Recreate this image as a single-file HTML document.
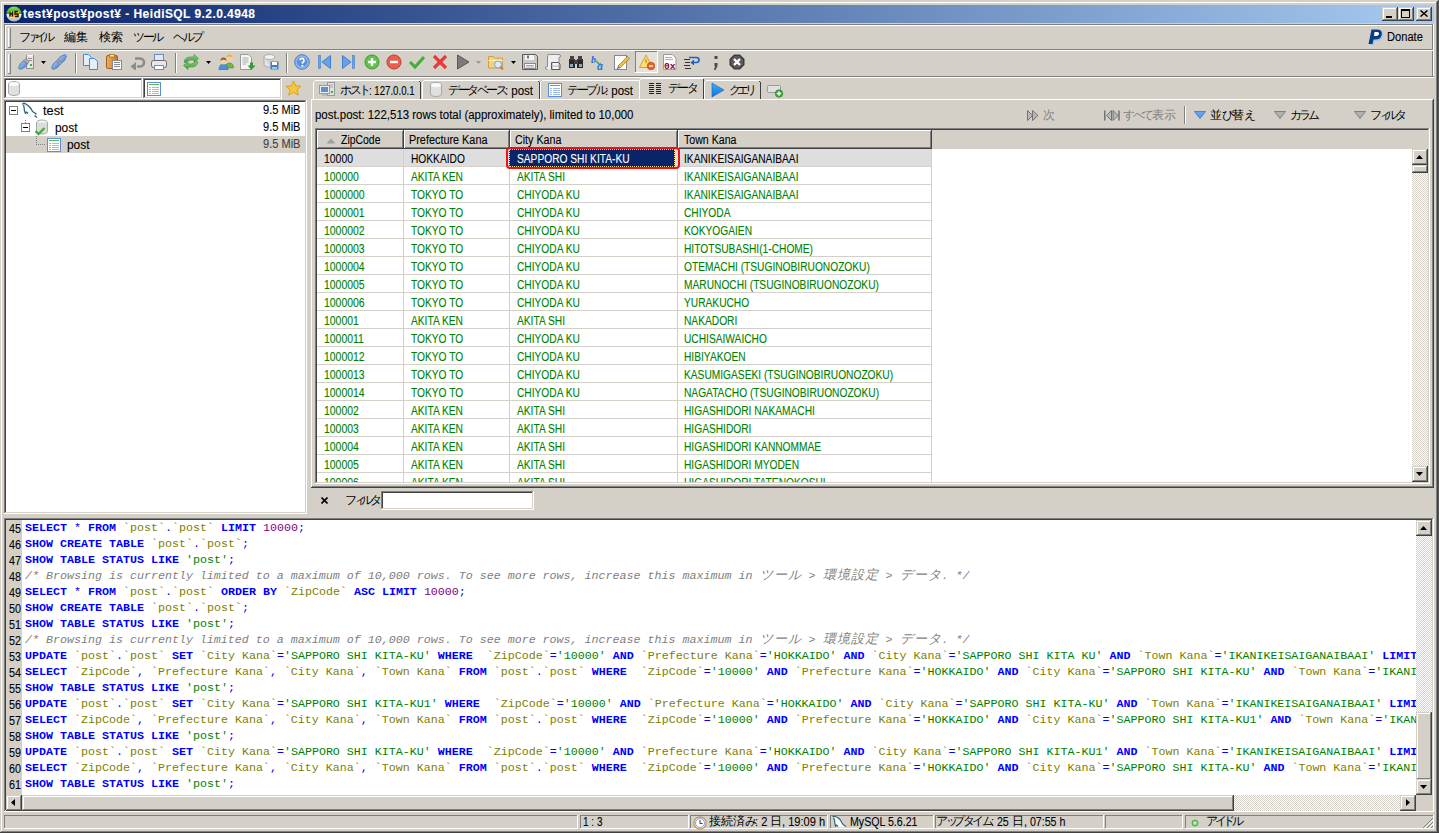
<!DOCTYPE html><html><head><meta charset="utf-8"><style>
html,body{margin:0;padding:0}
body{width:1439px;height:833px;position:relative;overflow:hidden;background:#d4d0c8;font-family:"Liberation Sans",sans-serif;font-size:12px;color:#000}
div,svg{position:absolute;box-sizing:border-box}
.t{white-space:pre;line-height:14px;font-size:12px;transform-origin:0 0;-webkit-text-stroke:0.1px currentColor}
.c{white-space:pre;line-height:14px;font-size:12px;text-align:center;overflow:visible}
.m{white-space:pre;font-family:"Liberation Mono",monospace;font-size:11.67px;line-height:16px}
.m i{display:inline-block;width:14px;font-style:inherit;text-align:center;font-size:13px;line-height:14px}
.kw{color:#0000ff;font-weight:bold}
.op{color:#0000ff}
.id{color:#808000}
.st{color:#008000}
.nu{color:#800080}
.cm{color:#808080;font-style:italic}
</style></head><body>
<div style="left:1px;top:2px;width:1px;height:829px;background:#ffffff"></div>
<div style="left:1px;top:2px;width:1436px;height:1px;background:#ffffff"></div>
<div style="left:1436px;top:2px;width:1px;height:829px;background:#808080"></div>
<div style="left:1437px;top:1px;width:1px;height:831px;background:#404040"></div>
<div style="left:1438px;top:0px;width:1px;height:833px;background:#555"></div>
<div style="left:1px;top:831px;width:1436px;height:1px;background:#808080"></div>
<div style="left:0px;top:832px;width:1439px;height:1px;background:#404040"></div>
<div style="left:4px;top:5px;width:1430px;height:18px;background:linear-gradient(to right,#0a246a,#a6caf0)"></div>
<svg style="left:6px;top:6px" width="16" height="16" viewBox="0 0 16 16"><defs><linearGradient id="hg" x1="0" y1="0" x2="0" y2="1"><stop offset="0" stop-color="#8ee05a"/><stop offset="0.5" stop-color="#3aaa12"/><stop offset="0.5" stop-color="#f4f4f4"/><stop offset="1" stop-color="#b0b0b0"/></linearGradient></defs><circle cx="8" cy="8" r="7.6" fill="url(#hg)"/><rect x="3" y="5" width="10" height="6" fill="#f8b828"/><path d="M4 5.5v5M4 8h2.5M6.5 5.5v5M12 5.5h-3v2.5h3v2.5h-3" stroke="#111" stroke-width="1.3" fill="none"/></svg>
<div class="t" style="left:23px;top:7px;color:#fff;font-weight:bold;letter-spacing:0.43px">test¥post¥post¥ - HeidiSQL 9.2.0.4948</div>
<div style="left:1382px;top:7px;width:16px;height:14px;background:#d4d0c8"></div>
<div style="left:1383px;top:8px;width:14px;height:1px;background:#ffffff"></div>
<div style="left:1383px;top:8px;width:1px;height:12px;background:#ffffff"></div>
<div style="left:1382px;top:20px;width:16px;height:1px;background:#404040"></div>
<div style="left:1397px;top:7px;width:1px;height:14px;background:#404040"></div>
<div style="left:1383px;top:19px;width:14px;height:1px;background:#808080"></div>
<div style="left:1396px;top:8px;width:1px;height:12px;background:#808080"></div>
<div style="left:1398px;top:7px;width:16px;height:14px;background:#d4d0c8"></div>
<div style="left:1399px;top:8px;width:14px;height:1px;background:#ffffff"></div>
<div style="left:1399px;top:8px;width:1px;height:12px;background:#ffffff"></div>
<div style="left:1398px;top:20px;width:16px;height:1px;background:#404040"></div>
<div style="left:1413px;top:7px;width:1px;height:14px;background:#404040"></div>
<div style="left:1399px;top:19px;width:14px;height:1px;background:#808080"></div>
<div style="left:1412px;top:8px;width:1px;height:12px;background:#808080"></div>
<div style="left:1416px;top:7px;width:16px;height:14px;background:#d4d0c8"></div>
<div style="left:1417px;top:8px;width:14px;height:1px;background:#ffffff"></div>
<div style="left:1417px;top:8px;width:1px;height:12px;background:#ffffff"></div>
<div style="left:1416px;top:20px;width:16px;height:1px;background:#404040"></div>
<div style="left:1431px;top:7px;width:1px;height:14px;background:#404040"></div>
<div style="left:1417px;top:19px;width:14px;height:1px;background:#808080"></div>
<div style="left:1430px;top:8px;width:1px;height:12px;background:#808080"></div>
<div style="left:1386px;top:16px;width:6px;height:2px;background:#000"></div>
<div style="left:1401px;top:9px;width:9px;height:9px;border:1px solid #000;border-top-width:2px"></div>
<svg style="left:1420px;top:10px" width="8" height="7" viewBox="0 0 8 7"><path d="M0.5 0.5 L7.5 6.5 M7.5 0.5 L0.5 6.5" stroke="#000" stroke-width="1.5"/></svg>
<div style="left:4px;top:24px;width:1430px;height:1px;background:#808080"></div>
<div style="left:4px;top:24px;width:1px;height:53px;background:#808080"></div>
<div style="left:5px;top:25px;width:1428px;height:1px;background:#ffffff"></div>
<div style="left:5px;top:25px;width:1px;height:52px;background:#ffffff"></div>
<div style="left:1432px;top:25px;width:1px;height:52px;background:#808080"></div>
<div style="left:1433px;top:24px;width:1px;height:54px;background:#ffffff"></div>
<div style="left:5px;top:49px;width:1428px;height:1px;background:#808080"></div>
<div style="left:5px;top:50px;width:1428px;height:1px;background:#ffffff"></div>
<div style="left:4px;top:76px;width:1430px;height:1px;background:#808080"></div>
<div style="left:4px;top:77px;width:1430px;height:1px;background:#ffffff"></div>
<div style="left:8px;top:28px;width:1px;height:19px;background:#ffffff"></div>
<div style="left:9px;top:28px;width:1px;height:19px;background:#d4d0c8"></div>
<div style="left:10px;top:28px;width:1px;height:19px;background:#808080"></div>
<div style="left:8px;top:47px;width:3px;height:1px;background:#808080"></div>
<div style="left:8px;top:54px;width:1px;height:19px;background:#ffffff"></div>
<div style="left:9px;top:54px;width:1px;height:19px;background:#d4d0c8"></div>
<div style="left:10px;top:54px;width:1px;height:19px;background:#808080"></div>
<div style="left:8px;top:73px;width:3px;height:1px;background:#808080"></div>
<div class="c" style="left:19.0px;top:30px;width:8.7px;color:#000;">フ</div>
<div class="c" style="left:27.7px;top:30px;width:6.9px;color:#000;">ァ</div>
<div class="c" style="left:34.6px;top:30px;width:8.7px;color:#000;">イ</div>
<div class="c" style="left:43.3px;top:30px;width:8.7px;color:#000;">ル</div>
<div class="c" style="left:64.0px;top:30px;width:11.5px;color:#000;">編</div>
<div class="c" style="left:75.5px;top:30px;width:11.5px;color:#000;">集</div>
<div class="c" style="left:99.0px;top:30px;width:11.5px;color:#000;">検</div>
<div class="c" style="left:110.5px;top:30px;width:11.5px;color:#000;">索</div>
<div class="c" style="left:133.0px;top:30px;width:9.7px;color:#000;">ツ</div>
<div class="c" style="left:142.7px;top:30px;width:9.7px;color:#000;">ー</div>
<div class="c" style="left:152.3px;top:30px;width:9.7px;color:#000;">ル</div>
<div class="c" style="left:173.0px;top:30px;width:9.7px;color:#000;">ヘ</div>
<div class="c" style="left:182.7px;top:30px;width:9.7px;color:#000;">ル</div>
<div class="c" style="left:192.3px;top:30px;width:9.7px;color:#000;">プ</div>
<svg style="left:1368px;top:29px" width="17" height="17" viewBox="0 0 17 17"><path d="M5 2 h6 c4 0 5 3 4 6 c-1 3 -3 4 -6 4 h-2 l-1 4 h-4 z" fill="#a9c6ea"/><path d="M3.5 0.5 h6 c4 0 5 3 4 6 c-1 3 -3 4 -6 4 h-2 l-1 4.5 h-4 z" fill="#0c3d7e"/><path d="M6.5 3 h2.5 c2 0 2 1 2 2 c-0.3 1.3 -1.2 2 -3 2 h-2 z" fill="#fff"/></svg>
<div class="t" style="left:1387.0px;top:30px;color:#000;transform:scaleX(0.927)">Donate</div>
<svg style="left:18px;top:54px" width="16" height="16" viewBox="0 0 16 16"><defs><linearGradient id="pl" x1="0" y1="0" x2="1" y2="1"><stop offset="0" stop-color="#b8d4f4"/><stop offset="1" stop-color="#3f78d0"/></linearGradient></defs><rect x="8.5" y="1.5" width="7" height="13" fill="#e6e6e6" stroke="#8c8c8c"/><path d="M9 1.5h6" stroke="#fafafa"/><path d="M10 4.5h4M10 6.5h4" stroke="#909090"/><rect x="12" y="10" width="2" height="2" fill="#40b040"/><path d="M0.5 14 L2.5 9.5 L6 6.5 L9.5 10 L6.5 13.5 L2 15.5 Z" fill="url(#pl)" stroke="#3a70c8" stroke-width="0.8"/><path d="M6 6.5 L8 4.5 L11 7.5 L9.5 10 Z" fill="#b0b0b0" stroke="#707070" stroke-width="0.7"/></svg>
<svg style="left:41px;top:61px" width="5" height="3" viewBox="0 0 5 3"><path d="M0 0 L5 0 L2.5 3 Z" fill="#000"/></svg>
<svg style="left:51px;top:54px" width="16" height="16" viewBox="0 0 16 16"><path d="M0.5 14 L2.5 9.5 L5.5 7 L9 10.5 L6.5 13.5 L2 15.5 Z" fill="url(#pl)" stroke="#3a70c8" stroke-width="0.8"/><path d="M15.5 2 L13.5 6.5 L10.5 9 L7 5.5 L9.5 2.5 L14 0.5 Z" fill="url(#pl)" stroke="#3a70c8" stroke-width="0.8"/><path d="M5.5 7 L7 5.5 L10.5 9 L9 10.5 Z" fill="#b0b0b0" stroke="#707070" stroke-width="0.7"/></svg>
<div style="left:75px;top:53px;width:1px;height:20px;background:#808080"></div>
<div style="left:76px;top:53px;width:1px;height:20px;background:#ffffff"></div>
<svg style="left:83px;top:54px" width="16" height="16" viewBox="0 0 16 16"><path d="M0.5 0.5 h5 l3 3 v8 h-8 z" fill="#e4eefb" stroke="#4a86d8"/><path d="M6.5 4.5 h5 l3 3 v8 h-8 z" fill="#e4eefb" stroke="#4a86d8"/></svg>
<svg style="left:106px;top:54px" width="16" height="16" viewBox="0 0 16 16"><defs><linearGradient id="cb" x1="0" y1="0" x2="1" y2="0"><stop offset="0" stop-color="#f0b060"/><stop offset="1" stop-color="#c07828"/></linearGradient></defs><rect x="0.5" y="1.5" width="11" height="13" rx="1.5" fill="url(#cb)" stroke="#a0601a"/><rect x="3.5" y="0.5" width="5" height="2.5" fill="#f8e0a0" stroke="#b07020" stroke-width="0.8"/><rect x="6.5" y="6.5" width="9" height="9" fill="#fafafa" stroke="#8a8a8a"/><path d="M8 8.5h6M8 10.5h6M8 12.5h6" stroke="#8a8a8a"/></svg>
<svg style="left:130px;top:54px" width="16" height="16" viewBox="0 0 16 16"><path d="M5 4.5 h5 a4 4 0 0 1 0 8 h-3" fill="none" stroke="#8c8c8c" stroke-width="2.6"/><path d="M0.5 12.5 l5.5 -4.5 v9 z" fill="#8c8c8c"/></svg>
<svg style="left:151px;top:54px" width="16" height="16" viewBox="0 0 16 16"><rect x="3.5" y="0.5" width="9" height="7" fill="#dbe9fb" stroke="#6b8fbf"/><rect x="0.5" y="6.5" width="15" height="7" rx="2" fill="#e8e8e8" stroke="#6a6a6a"/><rect x="3.5" y="11.5" width="9" height="4" fill="#fff" stroke="#6b8fbf"/></svg>
<div style="left:175px;top:53px;width:1px;height:20px;background:#808080"></div>
<div style="left:176px;top:53px;width:1px;height:20px;background:#ffffff"></div>
<svg style="left:183px;top:54px" width="16" height="16" viewBox="0 0 16 16"><defs><linearGradient id="gr" x1="0" y1="0" x2="0" y2="1"><stop offset="0" stop-color="#90d880"/><stop offset="1" stop-color="#3a9a3a"/></linearGradient></defs><path d="M1 8 q1 -5 7 -5 h3 v-2.5 l4.5 4 l-4.5 4 v-2.5 h-3 q-4 0 -5 3 z" fill="url(#gr)" stroke="#3a8a3a" stroke-width="0.6"/><path d="M15 8 q-1 5 -7 5 h-3 v2.5 l-4.5 -4 l4.5 -4 v2.5 h3 q4 0 5 -3 z" fill="url(#gr)" stroke="#3a8a3a" stroke-width="0.6"/></svg>
<svg style="left:206px;top:61px" width="5" height="3" viewBox="0 0 5 3"><path d="M0 0 L5 0 L2.5 3 Z" fill="#000"/></svg>
<svg style="left:218px;top:54px" width="16" height="16" viewBox="0 0 16 16"><path d="M7.5 14 q0 -5 4 -5 q4 0 4 5 z" fill="#70b848" stroke="#4a8a30" stroke-width="0.6"/><circle cx="11.5" cy="4.5" r="3" fill="#f8d0a0"/><path d="M8.5 4 q0 -3.5 3 -3.5 q3 0 3 3.5 q-1 -1.5 -3 -1.5 q-2 0 -3 1.5z" fill="#f0b030"/><path d="M1 16 q0 -6 4.5 -6 q4.5 0 4.5 6 z" fill="#4a90e0" stroke="#2a6ab8" stroke-width="0.6"/><circle cx="5.5" cy="7.5" r="3" fill="#f8d0a0"/><path d="M2.5 7 q0 -3.5 3 -3.5 q3 0 3 3.5 q-1 -1.5 -3 -1.5 q-2 0 -3 1.5z" fill="#8a5a30"/></svg>
<svg style="left:240px;top:54px" width="16" height="16" viewBox="0 0 16 16"><path d="M0.5 0.5 h8 l3 3 v12 h-11 z" fill="#f6f6f6" stroke="#999"/><path d="M2.5 4h6M2.5 6h6M2.5 8h6M2.5 10h4" stroke="#aaa"/><path d="M10 8.5 h3 v3 h2.5 l-4 4.5 l-4 -4.5 h2.5 z" fill="#3a9a3a"/></svg>
<svg style="left:263px;top:54px" width="16" height="16" viewBox="0 0 16 16"><ellipse cx="6.5" cy="3" rx="5.5" ry="2.5" fill="#f2f2f2" stroke="#aaa"/><path d="M1 3 v8 a5.5 2.5 0 0 0 7 2" fill="#e4e4e4" stroke="#aaa"/><rect x="7.5" y="7.5" width="8" height="8" fill="#3f7fd0"/><rect x="9" y="8" width="5" height="3" fill="#fff"/><rect x="9" y="13" width="5" height="2" fill="#9cd"/></svg>
<div style="left:286px;top:53px;width:1px;height:20px;background:#808080"></div>
<div style="left:287px;top:53px;width:1px;height:20px;background:#ffffff"></div>
<svg style="left:294px;top:54px" width="16" height="16" viewBox="0 0 16 16"><circle cx="8" cy="8" r="7.3" fill="#8fb4e8" stroke="#4a7cc8"/><circle cx="8" cy="8" r="5" fill="#5b8fd8"/><path d="M6 6.3 a2 2 0 1 1 2.5 2 v1.5" stroke="#fff" stroke-width="1.6" fill="none"/><rect x="7.5" y="11" width="1.8" height="1.8" fill="#fff"/></svg>
<svg style="left:317px;top:54px" width="16" height="16" viewBox="0 0 16 16"><rect x="1.5" y="1.5" width="2" height="13" fill="#6aa0e6" stroke="#3f7fd0" stroke-width="0.6"/><path d="M13.5 1.5 L5 8 L13.5 14.5 Z" fill="#6aa0e6" stroke="#3f7fd0"/></svg>
<svg style="left:340px;top:54px" width="16" height="16" viewBox="0 0 16 16"><rect x="12.5" y="1.5" width="2" height="13" fill="#6aa0e6" stroke="#3f7fd0" stroke-width="0.6"/><path d="M2.5 1.5 L11 8 L2.5 14.5 Z" fill="#6aa0e6" stroke="#3f7fd0"/></svg>
<svg style="left:364px;top:54px" width="16" height="16" viewBox="0 0 16 16"><circle cx="8" cy="8" r="7" fill="#62c24e" stroke="#3a9a2a"/><path d="M4 8h8M8 4v8" stroke="#fff" stroke-width="2.4"/></svg>
<svg style="left:386px;top:54px" width="16" height="16" viewBox="0 0 16 16"><circle cx="8" cy="8" r="7" fill="#ea6050" stroke="#c03a2a"/><path d="M4 8h8" stroke="#fff" stroke-width="2.4"/></svg>
<svg style="left:409px;top:54px" width="16" height="16" viewBox="0 0 16 16"><path d="M1 8 L6 13 L15 3" fill="none" stroke="#42ae3a" stroke-width="3"/></svg>
<svg style="left:432px;top:54px" width="16" height="16" viewBox="0 0 16 16"><path d="M2 2 L14 14 M14 2 L2 14" stroke="#e83a3a" stroke-width="3.2"/></svg>
<svg style="left:455px;top:54px" width="16" height="16" viewBox="0 0 16 16"><path d="M2.5 1 L14 8 L2.5 15 Z" fill="#7a7a7a" stroke="#5a5a5a"/></svg>
<svg style="left:476px;top:61px" width="5" height="3" viewBox="0 0 5 3"><path d="M0 0 L5 0 L2.5 3 Z" fill="#999"/></svg>
<svg style="left:488px;top:54px" width="16" height="16" viewBox="0 0 16 16"><path d="M0.5 2.5 h5 l1.5 1.5 h7.5 v10 h-14 z" fill="#f6d27a" stroke="#d0a040"/><path d="M0.5 6.5 h14" stroke="#fff3c8"/><circle cx="10" cy="10.5" r="3.5" fill="#d8e8ff" stroke="#7aa0d8"/><path d="M12.5 13 L15 15.5" stroke="#d07a30" stroke-width="2"/></svg>
<svg style="left:511px;top:61px" width="5" height="3" viewBox="0 0 5 3"><path d="M0 0 L5 0 L2.5 3 Z" fill="#000"/></svg>
<svg style="left:522px;top:54px" width="16" height="16" viewBox="0 0 16 16"><path d="M0.5 0.5 h13 l2 2 v13 h-15 z" fill="#c8c8c8" stroke="#5a5a5a"/><rect x="3" y="1" width="9" height="5" fill="#f4f4f4"/><rect x="5" y="1.5" width="2" height="3" fill="#777"/><rect x="2.5" y="9.5" width="11" height="5" fill="#fafafa" stroke="#8a8a8a"/><path d="M4 11.5h8M4 13h8" stroke="#aaa"/></svg>
<svg style="left:545px;top:54px" width="16" height="16" viewBox="0 0 16 16"><path d="M2.5 15.5 q-2 0 -2 -1.5 q0 -1.5 2 -1.5 v-11 q0 -1 1.5 -1 h10 q1.5 0 1.5 1.5 q0 1.5 -1.5 1.5 v12" fill="#eeeeee" stroke="#8a8a8a"/><path d="M6.5 8.5 h7 l1.5 1.5 v5.5 h-8.5 z" fill="#c8c8c8" stroke="#5a5a5a"/><rect x="8" y="9" width="5" height="2.5" fill="#f4f4f4"/><rect x="8" y="13" width="5" height="2" fill="#fafafa"/></svg>
<svg style="left:568px;top:54px" width="16" height="16" viewBox="0 0 16 16"><rect x="1" y="5" width="6" height="9" fill="#2a2a2a"/><rect x="9" y="5" width="6" height="9" fill="#2a2a2a"/><rect x="6" y="6" width="4" height="4" fill="#444"/><rect x="2" y="2" width="4" height="4" fill="#444"/><rect x="10" y="2" width="4" height="4" fill="#444"/><rect x="2" y="10" width="3" height="3" fill="#8ab"/><rect x="11" y="10" width="3" height="3" fill="#8ab"/></svg>
<svg style="left:591px;top:54px" width="16" height="16" viewBox="0 0 16 16"><text x="0" y="9" font-size="10" font-style="italic" font-weight="bold" fill="#2a6ad8" font-family="Liberation Serif">b</text><path d="M5 7 L9 11" stroke="#40a040" stroke-width="1.5"/><path d="M7 11.5 L10 11.5 L10 8.5 Z" fill="#40a040"/><text x="6" y="16" font-size="12" font-style="italic" font-weight="bold" fill="#2a7ae8" font-family="Liberation Serif">a</text></svg>
<svg style="left:614px;top:54px" width="16" height="16" viewBox="0 0 16 16"><rect x="0.5" y="1.5" width="12" height="14" fill="#fff" stroke="#888"/><path d="M4 12 L13.5 2.5 L15.5 4.5 L6 14 Z" fill="#f0c040" stroke="#a07010" stroke-width="0.7"/><path d="M2.5 15.5 L4 12 L6 14 Z" fill="#5a7ac0"/></svg>
<div style="left:635px;top:51px;width:23px;height:1px;background:#808080"></div>
<div style="left:635px;top:51px;width:1px;height:22px;background:#808080"></div>
<div style="left:635px;top:72px;width:23px;height:1px;background:#ffffff"></div>
<div style="left:657px;top:51px;width:1px;height:22px;background:#ffffff"></div>
<div style="left:636px;top:52px;width:21px;height:20px;background:#e4e1db"></div>
<svg style="left:639px;top:54px" width="16" height="16" viewBox="0 0 16 16"><path d="M7 1 L13.5 13.5 L0.5 13.5 Z" fill="#fbe070" stroke="#e0a020" stroke-linejoin="round"/><path d="M7 5 v4" stroke="#c8a040" stroke-width="1.6"/><circle cx="12" cy="12" r="3.8" fill="#f06020" stroke="#c04010" stroke-width="0.6"/><path d="M10 12h4" stroke="#fff" stroke-width="1.4"/></svg>
<svg style="left:662px;top:54px" width="16" height="16" viewBox="0 0 16 16"><path d="M1.5 0.5 h9 l3.5 3.5 v11.5 h-12.5 z" fill="#fafafa" stroke="#9a9a9a"/><path d="M3 3.5h7M3 5.5h8" stroke="#b0b0b0"/><text x="2" y="14.5" font-size="9.5" font-weight="bold" fill="#800030" font-family="Liberation Mono">0x</text></svg>
<svg style="left:684px;top:54px" width="16" height="16" viewBox="0 0 16 16"><path d="M0 5.5h6M1 8.5h5M0 11.5h6M1 14.5h6" stroke="#333" stroke-width="1"/><path d="M5 3.5 h7.5 a2.5 2.5 0 0 1 0 5 h-4" fill="none" stroke="#1a60c8" stroke-width="1.6"/><path d="M10 5.5 L6.5 8.5 L10 11.5 Z" fill="#1a60c8"/></svg>
<svg style="left:708px;top:54px" width="16" height="16" viewBox="0 0 16 16"><rect x="6.5" y="2" width="3" height="3" fill="#4a4a4a"/><path d="M6.5 9 h3 v3 l-2 4 h-1.5 l1 -4 h-0.5 z" fill="#4a4a4a"/></svg>
<svg style="left:729px;top:54px" width="16" height="16" viewBox="0 0 16 16"><path d="M5 0.5 h6 l4.5 4.5 v6 l-4.5 4.5 h-6 l-4.5 -4.5 v-6 z" fill="#3c3c3c"/><path d="M5.5 2 h5 l3.5 3.5 v5 l-3.5 3.5 h-5 l-3.5 -3.5 v-5 z" fill="#5a5a5a"/><path d="M5 5 L11 11 M11 5 L5 11" stroke="#fff" stroke-width="2.4"/></svg>
<div style="left:4px;top:78px;width:139px;height:21px;background:#ffffff"></div>
<div style="left:4px;top:78px;width:139px;height:1px;background:#808080"></div>
<div style="left:4px;top:78px;width:1px;height:21px;background:#808080"></div>
<div style="left:4px;top:98px;width:139px;height:1px;background:#ffffff"></div>
<div style="left:142px;top:78px;width:1px;height:21px;background:#ffffff"></div>
<div style="left:5px;top:79px;width:137px;height:1px;background:#404040"></div>
<div style="left:5px;top:79px;width:1px;height:19px;background:#404040"></div>
<div style="left:5px;top:97px;width:137px;height:1px;background:#d4d0c8"></div>
<div style="left:141px;top:79px;width:1px;height:19px;background:#d4d0c8"></div>
<div style="left:143px;top:78px;width:139px;height:21px;background:#ffffff"></div>
<div style="left:143px;top:78px;width:139px;height:1px;background:#808080"></div>
<div style="left:143px;top:78px;width:1px;height:21px;background:#808080"></div>
<div style="left:143px;top:98px;width:139px;height:1px;background:#ffffff"></div>
<div style="left:281px;top:78px;width:1px;height:21px;background:#ffffff"></div>
<div style="left:144px;top:79px;width:137px;height:1px;background:#404040"></div>
<div style="left:144px;top:79px;width:1px;height:19px;background:#404040"></div>
<div style="left:144px;top:97px;width:137px;height:1px;background:#d4d0c8"></div>
<div style="left:280px;top:79px;width:1px;height:19px;background:#d4d0c8"></div>
<div style="left:4px;top:100px;width:303px;height:414px;background:#ffffff"></div>
<div style="left:4px;top:100px;width:303px;height:1px;background:#808080"></div>
<div style="left:4px;top:100px;width:1px;height:414px;background:#808080"></div>
<div style="left:4px;top:513px;width:303px;height:1px;background:#ffffff"></div>
<div style="left:306px;top:100px;width:1px;height:414px;background:#ffffff"></div>
<div style="left:5px;top:101px;width:301px;height:1px;background:#404040"></div>
<div style="left:5px;top:101px;width:1px;height:412px;background:#404040"></div>
<div style="left:5px;top:512px;width:301px;height:1px;background:#d4d0c8"></div>
<div style="left:305px;top:101px;width:1px;height:412px;background:#d4d0c8"></div>
<div style="left:6px;top:136px;width:299px;height:17px;background:#d4d0c8"></div>
<div class="t" style="left:43.0px;top:104px;color:#000;transform:scaleX(1.062)">test</div>
<div class="t" style="left:55.0px;top:121px;color:#000;transform:scaleX(0.992)">post</div>
<div class="t" style="left:67.0px;top:138px;color:#000;transform:scaleX(0.992)">post</div>
<div class="t" style="left:263.0px;top:103px;color:#000;transform:scaleX(0.921)">9.5 MiB</div>
<div class="t" style="left:263.0px;top:120px;color:#000;transform:scaleX(0.921)">9.5 MiB</div>
<div class="t" style="left:263.0px;top:137px;color:#404040;transform:scaleX(0.921)">9.5 MiB</div>
<svg style="left:8px;top:81px" width="12" height="16" viewBox="0 0 12 16"><ellipse cx="6" cy="3" rx="5.5" ry="2.5" fill="#f6f6f6" stroke="#a8a8a8"/><path d="M0.5 3 v9 a5.5 2.5 0 0 0 11 0 v-9" fill="#e0e0e0" stroke="#a8a8a8"/><ellipse cx="6" cy="3" rx="5" ry="2" fill="#fafafa"/></svg>
<svg style="left:147px;top:82px" width="14" height="14" viewBox="0 0 14 14"><rect x="0.5" y="0.5" width="13" height="13" fill="#fff" stroke="#5a90d8"/><rect x="2" y="2" width="10" height="1" fill="#5cb85c"/><path d="M2 5.5h10M2 7.5h10M2 9.5h10M2 11.5h10" stroke="#9bbce8"/><path d="M4.5 5v7" stroke="#fff"/></svg>
<svg style="left:285px;top:80px" width="17" height="17" viewBox="0 0 17 17"><path d="M8.5 1 L10.7 6 L16 6.3 L11.9 9.8 L13.3 15.2 L8.5 12.3 L3.7 15.2 L5.1 9.8 L1 6.3 L6.3 6 Z" fill="#f6c838" stroke="#d89818" stroke-width="0.8"/></svg>
<div style="left:9px;top:106px;width:9px;height:9px;border:1px solid #808080;background:#fff"></div>
<div style="left:11px;top:110px;width:5px;height:1px;background:#000"></div>
<div style="left:21px;top:123px;width:9px;height:9px;border:1px solid #808080;background:#fff"></div>
<div style="left:23px;top:127px;width:5px;height:1px;background:#000"></div>
<div style="left:25px;top:120px;width:1px;height:3px;border-left:1px dotted #808080"></div>
<div style="left:36px;top:136px;width:1px;height:9px;border-left:1px dotted #808080"></div>
<div style="left:36px;top:144px;width:9px;height:1px;border-top:1px dotted #808080"></div>
<svg style="left:18px;top:100px" width="22" height="20" viewBox="0 0 22 20"><path d="M4.5 4.5 L5 3.5 L7 3.5 L8.5 4.5 L10 5.5 L12 7.5 L13.5 9.5 L14.5 11.5 L17 13 L18.5 14.5 M16.5 15.5 L19 17.5 M5.5 5 L6 7 L6.5 11 L7.5 13.5 L8.5 12 L10 13.5" fill="none" stroke="#2e6478" stroke-width="1.3" stroke-linejoin="round"/><path d="M10.5 14.5 L13.5 17.5" stroke="#9ab" stroke-width="0.9" stroke-dasharray="1 1"/></svg>
<svg style="left:35px;top:119px" width="13" height="17" viewBox="0 0 13 17"><ellipse cx="7" cy="3.5" rx="5.5" ry="2.5" fill="#f6f6f6" stroke="#a8a8a8"/><path d="M1.5 3.5 v9 a5.5 2.5 0 0 0 11 0 v-9" fill="#dcdcdc" stroke="#a8a8a8"/><path d="M0.5 12 L3.5 15 L9.5 9" fill="none" stroke="#42ae3a" stroke-width="2.4"/></svg>
<svg style="left:47px;top:138px" width="14" height="14" viewBox="0 0 14 14"><rect x="0.5" y="0.5" width="13" height="13" fill="#fff" stroke="#5a90d8"/><rect x="2" y="2" width="10" height="1" fill="#5cb85c"/><path d="M2 5.5h10M2 7.5h10M2 9.5h10M2 11.5h10" stroke="#9bbce8"/><path d="M4.5 5v7" stroke="#fff"/></svg>
<div style="left:311px;top:99px;width:1123px;height:1px;background:#ffffff"></div>
<div style="left:311px;top:99px;width:1px;height:389px;background:#ffffff"></div>
<div style="left:1432px;top:100px;width:1px;height:387px;background:#808080"></div>
<div style="left:1433px;top:99px;width:1px;height:389px;background:#404040"></div>
<div style="left:312px;top:486px;width:1121px;height:1px;background:#808080"></div>
<div style="left:311px;top:487px;width:1123px;height:1px;background:#404040"></div>
<div style="left:313px;top:81px;width:108px;height:18px;background:#d4d0c8"></div>
<div style="left:315px;top:80px;width:105px;height:1px;background:#ffffff"></div>
<div style="left:313px;top:82px;width:1px;height:17px;background:#ffffff"></div>
<div style="left:314px;top:81px;width:1px;height:1px;background:#fff"></div>
<div style="left:420px;top:82px;width:1px;height:17px;background:#404040"></div>
<div style="left:419px;top:81px;width:1px;height:1px;background:#404040"></div>
<svg style="left:319px;top:82px" width="17" height="16" viewBox="0 0 17 16"><rect x="8.5" y="0.5" width="7" height="13" fill="#e0e0e0" stroke="#999"/><path d="M10 3h4M10 5h4" stroke="#aaa"/><rect x="12" y="9" width="2" height="2" fill="#3b3"/><rect x="0.5" y="3.5" width="10" height="8" fill="#f0f0f0" stroke="#999"/><rect x="2" y="5" width="7" height="5" fill="#5a8ed8"/><rect x="3" y="12" width="5" height="2" fill="#bbb"/></svg>
<div class="c" style="left:340.0px;top:83px;width:9.5px;color:#000;">ホ</div>
<div class="c" style="left:349.5px;top:83px;width:9.5px;color:#000;">ス</div>
<div class="c" style="left:359.0px;top:83px;width:9.5px;color:#000;">ト</div>
<div class="t" style="left:368.5px;top:84px;color:#000;transform:scaleX(0.803)">: 127.0.0.1</div>
<div style="left:422px;top:81px;width:118px;height:18px;background:#d4d0c8"></div>
<div style="left:424px;top:80px;width:115px;height:1px;background:#ffffff"></div>
<div style="left:422px;top:82px;width:1px;height:17px;background:#ffffff"></div>
<div style="left:423px;top:81px;width:1px;height:1px;background:#fff"></div>
<div style="left:539px;top:82px;width:1px;height:17px;background:#404040"></div>
<div style="left:538px;top:81px;width:1px;height:1px;background:#404040"></div>
<svg style="left:430px;top:82px" width="12" height="16" viewBox="0 0 12 16"><ellipse cx="6" cy="3" rx="5.5" ry="2.5" fill="#f6f6f6" stroke="#a8a8a8"/><path d="M0.5 3 v9 a5.5 2.5 0 0 0 11 0 v-9" fill="#e0e0e0" stroke="#a8a8a8"/><ellipse cx="6" cy="3" rx="5" ry="2" fill="#fafafa"/></svg>
<div class="c" style="left:448.0px;top:83px;width:9.5px;color:#000;">デ</div>
<div class="c" style="left:457.5px;top:83px;width:9.5px;color:#000;">ー</div>
<div class="c" style="left:467.0px;top:83px;width:9.5px;color:#000;">タ</div>
<div class="c" style="left:476.5px;top:83px;width:9.5px;color:#000;">ベ</div>
<div class="c" style="left:486.0px;top:83px;width:9.5px;color:#000;">ー</div>
<div class="c" style="left:495.5px;top:83px;width:9.5px;color:#000;">ス</div>
<div class="t" style="left:505.0px;top:84px;color:#000;transform:scaleX(0.955)">: post</div>
<div style="left:540px;top:81px;width:100px;height:18px;background:#d4d0c8"></div>
<div style="left:542px;top:80px;width:97px;height:1px;background:#ffffff"></div>
<div style="left:540px;top:82px;width:1px;height:17px;background:#ffffff"></div>
<div style="left:541px;top:81px;width:1px;height:1px;background:#fff"></div>
<svg style="left:548px;top:83px" width="14" height="14" viewBox="0 0 14 14"><rect x="0.5" y="0.5" width="13" height="13" fill="#fff" stroke="#5a90d8"/><rect x="2" y="2" width="10" height="1" fill="#5cb85c"/><path d="M2 5.5h10M2 7.5h10M2 9.5h10M2 11.5h10" stroke="#9bbce8"/><path d="M4.5 5v7" stroke="#fff"/></svg>
<div class="c" style="left:567.0px;top:83px;width:9.5px;color:#000;">テ</div>
<div class="c" style="left:576.5px;top:83px;width:9.5px;color:#000;">ー</div>
<div class="c" style="left:586.0px;top:83px;width:9.5px;color:#000;">ブ</div>
<div class="c" style="left:595.5px;top:83px;width:9.5px;color:#000;">ル</div>
<div class="t" style="left:605.0px;top:84px;color:#000;transform:scaleX(0.955)">: post</div>
<div style="left:641px;top:78px;width:62px;height:1px;background:#ffffff"></div>
<div style="left:639px;top:80px;width:1px;height:19px;background:#ffffff"></div>
<div style="left:640px;top:79px;width:1px;height:1px;background:#fff"></div>
<div style="left:703px;top:79px;width:1px;height:20px;background:#404040"></div>
<svg style="left:649px;top:83px" width="12" height="12" viewBox="0 0 12 12"><path d="M0 0.5h5M0 2.5h5M0 4.5h5M0 6.5h5M0 8.5h5M0 10.5h5M7 0.5h5M7 2.5h5M7 4.5h5M7 6.5h5M7 8.5h5M7 10.5h5" stroke="#222" stroke-width="1"/></svg>
<div class="c" style="left:668.0px;top:81px;width:9.3px;color:#000;">デ</div>
<div class="c" style="left:677.3px;top:81px;width:9.3px;color:#000;">ー</div>
<div class="c" style="left:686.7px;top:81px;width:9.3px;color:#000;">タ</div>
<div style="left:704px;top:81px;width:57px;height:18px;background:#d4d0c8"></div>
<div style="left:706px;top:80px;width:54px;height:1px;background:#ffffff"></div>
<div style="left:704px;top:82px;width:1px;height:17px;background:#ffffff"></div>
<div style="left:705px;top:81px;width:1px;height:1px;background:#fff"></div>
<div style="left:760px;top:82px;width:1px;height:17px;background:#404040"></div>
<div style="left:759px;top:81px;width:1px;height:1px;background:#404040"></div>
<svg style="left:711px;top:82px" width="14" height="16" viewBox="0 0 14 16"><defs><linearGradient id="pg" x1="0" y1="0" x2="0" y2="1"><stop offset="0" stop-color="#3ab0f8"/><stop offset="1" stop-color="#1a70d8"/></linearGradient></defs><path d="M1 1 L13 8 L1 15 Z" fill="url(#pg)" stroke="#1a60c0" stroke-width="0.6"/></svg>
<div class="c" style="left:729.0px;top:83px;width:8.0px;color:#000;">ク</div>
<div class="c" style="left:737.0px;top:83px;width:8.0px;color:#000;">エ</div>
<div class="c" style="left:745.0px;top:83px;width:8.0px;color:#000;">リ</div>
<svg style="left:767px;top:84px" width="17" height="14" viewBox="0 0 17 14"><rect x="0.5" y="1.5" width="13" height="7" rx="1" fill="#e0e0e0" stroke="#9a9a9a"/><circle cx="12" cy="9.5" r="3.8" fill="#3aa63a" stroke="#2a7a2a" stroke-width="0.5"/><path d="M9.8 9.5h4.4M12 7.3v4.4" stroke="#fff" stroke-width="1.3"/></svg>
<div class="t" style="left:315.0px;top:108px;color:#000;transform:scaleX(0.953)">post.post: 122,513 rows total (approximately), limited to 10,000</div>
<svg style="left:1027px;top:110px" width="12" height="11" viewBox="0 0 12 11"><path d="M0.5 0.5 L5.5 5.5 L0.5 10.5 Z M5.5 0.5 L11 5.5 L5.5 10.5 Z" fill="#b8b8b8" stroke="#6a6a6a" stroke-width="0.9"/></svg>
<div class="c" style="left:1043.0px;top:108px;width:12.0px;color:#808080;">次</div>
<svg style="left:1104px;top:110px" width="16" height="11" viewBox="0 0 16 11"><path d="M0.8 0.5v10" stroke="#6a6a6a" stroke-width="1.4"/><path d="M7.5 0.5 L2.5 5.5 L7.5 10.5 Z" fill="#b8b8b8" stroke="#6a6a6a" stroke-width="0.9"/><path d="M9 0.5 L14 5.5 L9 10.5 Z" fill="#b8b8b8" stroke="#6a6a6a" stroke-width="0.9"/><path d="M15 0.5v10" stroke="#6a6a6a" stroke-width="1.4"/></svg>
<div class="c" style="left:1123.0px;top:108px;width:9.6px;color:#808080;">す</div>
<div class="c" style="left:1132.6px;top:108px;width:9.6px;color:#808080;">べ</div>
<div class="c" style="left:1142.2px;top:108px;width:9.6px;color:#808080;">て</div>
<div class="c" style="left:1151.8px;top:108px;width:12.1px;color:#808080;">表</div>
<div class="c" style="left:1163.9px;top:108px;width:12.1px;color:#808080;">示</div>
<div style="left:1184px;top:106px;width:1px;height:18px;background:#808080"></div>
<div style="left:1185px;top:106px;width:1px;height:18px;background:#ffffff"></div>
<svg style="left:1194px;top:111px" width="12" height="8" viewBox="0 0 12 8"><path d="M0.5 0.5 L11.5 0.5 L6 7.5 Z" fill="#62a2ee" stroke="#3a6cc0" stroke-width="0.8"/></svg>
<div class="c" style="left:1210.0px;top:108px;width:12.0px;color:#000;">並</div>
<div class="c" style="left:1222.0px;top:108px;width:9.5px;color:#000;">び</div>
<div class="c" style="left:1231.5px;top:108px;width:12.0px;color:#000;">替</div>
<div class="c" style="left:1243.5px;top:108px;width:9.5px;color:#000;">え</div>
<svg style="left:1274px;top:111px" width="12" height="8" viewBox="0 0 12 8"><path d="M0.5 0.5 L11.5 0.5 L6 7.5 Z" fill="#b0b0b0" stroke="#707070" stroke-width="0.8"/></svg>
<div class="c" style="left:1290.0px;top:108px;width:9.0px;color:#000;">カ</div>
<div class="c" style="left:1299.0px;top:108px;width:9.0px;color:#000;">ラ</div>
<div class="c" style="left:1308.0px;top:108px;width:9.0px;color:#000;">ム</div>
<svg style="left:1354px;top:111px" width="12" height="8" viewBox="0 0 12 8"><path d="M0.5 0.5 L11.5 0.5 L6 7.5 Z" fill="#b0b0b0" stroke="#707070" stroke-width="0.8"/></svg>
<div class="c" style="left:1370.0px;top:108px;width:9.0px;color:#000;">フ</div>
<div class="c" style="left:1379.0px;top:108px;width:7.1px;color:#000;">ィ</div>
<div class="c" style="left:1386.1px;top:108px;width:9.0px;color:#000;">ル</div>
<div class="c" style="left:1395.0px;top:108px;width:9.0px;color:#000;">タ</div>
<div style="left:315px;top:128px;width:1115px;height:356px;background:#ffffff"></div>
<div style="left:315px;top:128px;width:1115px;height:1px;background:#808080"></div>
<div style="left:315px;top:128px;width:1px;height:356px;background:#808080"></div>
<div style="left:315px;top:483px;width:1115px;height:1px;background:#ffffff"></div>
<div style="left:1429px;top:128px;width:1px;height:356px;background:#ffffff"></div>
<div style="left:316px;top:129px;width:1113px;height:1px;background:#404040"></div>
<div style="left:316px;top:129px;width:1px;height:354px;background:#404040"></div>
<div style="left:316px;top:482px;width:1113px;height:1px;background:#d4d0c8"></div>
<div style="left:1428px;top:129px;width:1px;height:354px;background:#d4d0c8"></div>
<div style="left:317px;top:130px;width:1111px;height:352px;overflow:hidden">
<div style="left:0px;top:0px;width:1111px;height:19px;background:#d4d0c8"></div>
<div style="left:0px;top:0px;width:86px;height:1px;background:#ffffff"></div>
<div style="left:0px;top:0px;width:1px;height:18px;background:#ffffff"></div>
<div style="left:85px;top:1px;width:1px;height:17px;background:#808080"></div>
<div style="left:86px;top:0px;width:1px;height:19px;background:#404040"></div>
<div style="left:1px;top:17px;width:85px;height:1px;background:#808080"></div>
<div style="left:0px;top:18px;width:87px;height:1px;background:#404040"></div>
<div style="left:87px;top:0px;width:105px;height:1px;background:#ffffff"></div>
<div style="left:87px;top:0px;width:1px;height:18px;background:#ffffff"></div>
<div style="left:191px;top:1px;width:1px;height:17px;background:#808080"></div>
<div style="left:192px;top:0px;width:1px;height:19px;background:#404040"></div>
<div style="left:88px;top:17px;width:104px;height:1px;background:#808080"></div>
<div style="left:87px;top:18px;width:106px;height:1px;background:#404040"></div>
<div style="left:193px;top:0px;width:167px;height:1px;background:#ffffff"></div>
<div style="left:193px;top:0px;width:1px;height:18px;background:#ffffff"></div>
<div style="left:359px;top:1px;width:1px;height:17px;background:#808080"></div>
<div style="left:360px;top:0px;width:1px;height:19px;background:#404040"></div>
<div style="left:194px;top:17px;width:166px;height:1px;background:#808080"></div>
<div style="left:193px;top:18px;width:168px;height:1px;background:#404040"></div>
<div style="left:361px;top:0px;width:253px;height:1px;background:#ffffff"></div>
<div style="left:361px;top:0px;width:1px;height:18px;background:#ffffff"></div>
<div style="left:613px;top:1px;width:1px;height:17px;background:#808080"></div>
<div style="left:614px;top:0px;width:1px;height:19px;background:#404040"></div>
<div style="left:362px;top:17px;width:252px;height:1px;background:#808080"></div>
<div style="left:361px;top:18px;width:254px;height:1px;background:#404040"></div>
<svg style="left:9px;top:8px" width="10" height="6" viewBox="0 0 10 6"><path d="M5 0.5 L9.5 5.5 L0.5 5.5 Z" fill="#a0a0a0"/></svg>
<div class="t" style="left:24.0px;top:3px;color:#000;transform:scaleX(0.870)">ZipCode</div>
<div class="t" style="left:92.0px;top:3px;color:#000;transform:scaleX(0.905)">Prefecture Kana</div>
<div class="t" style="left:198.0px;top:3px;color:#000;transform:scaleX(0.893)">City Kana</div>
<div class="t" style="left:367.0px;top:3px;color:#000;transform:scaleX(0.884)">Town Kana</div>
<div style="left:0px;top:19px;width:615px;height:17px;background:#dedede"></div>
<div style="left:0px;top:36px;width:615px;height:1px;background:#d4d0c8"></div>
<div style="left:0px;top:54px;width:615px;height:1px;background:#d4d0c8"></div>
<div style="left:0px;top:72px;width:615px;height:1px;background:#d4d0c8"></div>
<div style="left:0px;top:90px;width:615px;height:1px;background:#d4d0c8"></div>
<div style="left:0px;top:108px;width:615px;height:1px;background:#d4d0c8"></div>
<div style="left:0px;top:126px;width:615px;height:1px;background:#d4d0c8"></div>
<div style="left:0px;top:144px;width:615px;height:1px;background:#d4d0c8"></div>
<div style="left:0px;top:162px;width:615px;height:1px;background:#d4d0c8"></div>
<div style="left:0px;top:180px;width:615px;height:1px;background:#d4d0c8"></div>
<div style="left:0px;top:198px;width:615px;height:1px;background:#d4d0c8"></div>
<div style="left:0px;top:216px;width:615px;height:1px;background:#d4d0c8"></div>
<div style="left:0px;top:234px;width:615px;height:1px;background:#d4d0c8"></div>
<div style="left:0px;top:252px;width:615px;height:1px;background:#d4d0c8"></div>
<div style="left:0px;top:270px;width:615px;height:1px;background:#d4d0c8"></div>
<div style="left:0px;top:288px;width:615px;height:1px;background:#d4d0c8"></div>
<div style="left:0px;top:306px;width:615px;height:1px;background:#d4d0c8"></div>
<div style="left:0px;top:324px;width:615px;height:1px;background:#d4d0c8"></div>
<div style="left:0px;top:342px;width:615px;height:1px;background:#d4d0c8"></div>
<div style="left:0px;top:360px;width:615px;height:1px;background:#d4d0c8"></div>
<div style="left:86px;top:19px;width:1px;height:335px;background:#d4d0c8"></div>
<div style="left:192px;top:19px;width:1px;height:335px;background:#d4d0c8"></div>
<div style="left:360px;top:19px;width:1px;height:335px;background:#d4d0c8"></div>
<div style="left:614px;top:19px;width:1px;height:335px;background:#d4d0c8"></div>
<div style="left:189px;top:17px;width:174px;height:22px;border:2px solid #f01010;border-radius:4px;background:#dedede"></div>
<div style="left:192px;top:19px;width:166px;height:18px;background:#0a246a;border:1px dotted #e8d890"></div>
<div class="t" style="left:7.0px;top:22px;color:#000;transform:scaleX(0.870)">10000</div>
<div class="t" style="left:94.0px;top:22px;color:#000;transform:scaleX(0.850)">HOKKAIDO</div>
<div class="t" style="left:200.0px;top:22px;color:#fff;transform:scaleX(0.850)">SAPPORO SHI KITA-KU</div>
<div class="t" style="left:367.0px;top:22px;color:#000;transform:scaleX(0.850)">IKANIKEISAIGANAIBAAI</div>
<div class="t" style="left:7.0px;top:40px;color:#008000;transform:scaleX(0.870)">100000</div>
<div class="t" style="left:94.0px;top:40px;color:#008000;transform:scaleX(0.850)">AKITA KEN</div>
<div class="t" style="left:200.0px;top:40px;color:#008000;transform:scaleX(0.850)">AKITA SHI</div>
<div class="t" style="left:367.0px;top:40px;color:#008000;transform:scaleX(0.850)">IKANIKEISAIGANAIBAAI</div>
<div class="t" style="left:7.0px;top:58px;color:#008000;transform:scaleX(0.870)">1000000</div>
<div class="t" style="left:94.0px;top:58px;color:#008000;transform:scaleX(0.850)">TOKYO TO</div>
<div class="t" style="left:200.0px;top:58px;color:#008000;transform:scaleX(0.850)">CHIYODA KU</div>
<div class="t" style="left:367.0px;top:58px;color:#008000;transform:scaleX(0.850)">IKANIKEISAIGANAIBAAI</div>
<div class="t" style="left:7.0px;top:76px;color:#008000;transform:scaleX(0.870)">1000001</div>
<div class="t" style="left:94.0px;top:76px;color:#008000;transform:scaleX(0.850)">TOKYO TO</div>
<div class="t" style="left:200.0px;top:76px;color:#008000;transform:scaleX(0.850)">CHIYODA KU</div>
<div class="t" style="left:367.0px;top:76px;color:#008000;transform:scaleX(0.850)">CHIYODA</div>
<div class="t" style="left:7.0px;top:94px;color:#008000;transform:scaleX(0.870)">1000002</div>
<div class="t" style="left:94.0px;top:94px;color:#008000;transform:scaleX(0.850)">TOKYO TO</div>
<div class="t" style="left:200.0px;top:94px;color:#008000;transform:scaleX(0.850)">CHIYODA KU</div>
<div class="t" style="left:367.0px;top:94px;color:#008000;transform:scaleX(0.850)">KOKYOGAIEN</div>
<div class="t" style="left:7.0px;top:112px;color:#008000;transform:scaleX(0.870)">1000003</div>
<div class="t" style="left:94.0px;top:112px;color:#008000;transform:scaleX(0.850)">TOKYO TO</div>
<div class="t" style="left:200.0px;top:112px;color:#008000;transform:scaleX(0.850)">CHIYODA KU</div>
<div class="t" style="left:367.0px;top:112px;color:#008000;transform:scaleX(0.850)">HITOTSUBASHI(1-CHOME)</div>
<div class="t" style="left:7.0px;top:130px;color:#008000;transform:scaleX(0.870)">1000004</div>
<div class="t" style="left:94.0px;top:130px;color:#008000;transform:scaleX(0.850)">TOKYO TO</div>
<div class="t" style="left:200.0px;top:130px;color:#008000;transform:scaleX(0.850)">CHIYODA KU</div>
<div class="t" style="left:367.0px;top:130px;color:#008000;transform:scaleX(0.850)">OTEMACHI (TSUGINOBIRUONOZOKU)</div>
<div class="t" style="left:7.0px;top:148px;color:#008000;transform:scaleX(0.870)">1000005</div>
<div class="t" style="left:94.0px;top:148px;color:#008000;transform:scaleX(0.850)">TOKYO TO</div>
<div class="t" style="left:200.0px;top:148px;color:#008000;transform:scaleX(0.850)">CHIYODA KU</div>
<div class="t" style="left:367.0px;top:148px;color:#008000;transform:scaleX(0.850)">MARUNOCHI (TSUGINOBIRUONOZOKU)</div>
<div class="t" style="left:7.0px;top:166px;color:#008000;transform:scaleX(0.870)">1000006</div>
<div class="t" style="left:94.0px;top:166px;color:#008000;transform:scaleX(0.850)">TOKYO TO</div>
<div class="t" style="left:200.0px;top:166px;color:#008000;transform:scaleX(0.850)">CHIYODA KU</div>
<div class="t" style="left:367.0px;top:166px;color:#008000;transform:scaleX(0.850)">YURAKUCHO</div>
<div class="t" style="left:7.0px;top:184px;color:#008000;transform:scaleX(0.870)">100001</div>
<div class="t" style="left:94.0px;top:184px;color:#008000;transform:scaleX(0.850)">AKITA KEN</div>
<div class="t" style="left:200.0px;top:184px;color:#008000;transform:scaleX(0.850)">AKITA SHI</div>
<div class="t" style="left:367.0px;top:184px;color:#008000;transform:scaleX(0.850)">NAKADORI</div>
<div class="t" style="left:7.0px;top:202px;color:#008000;transform:scaleX(0.870)">1000011</div>
<div class="t" style="left:94.0px;top:202px;color:#008000;transform:scaleX(0.850)">TOKYO TO</div>
<div class="t" style="left:200.0px;top:202px;color:#008000;transform:scaleX(0.850)">CHIYODA KU</div>
<div class="t" style="left:367.0px;top:202px;color:#008000;transform:scaleX(0.850)">UCHISAIWAICHO</div>
<div class="t" style="left:7.0px;top:220px;color:#008000;transform:scaleX(0.870)">1000012</div>
<div class="t" style="left:94.0px;top:220px;color:#008000;transform:scaleX(0.850)">TOKYO TO</div>
<div class="t" style="left:200.0px;top:220px;color:#008000;transform:scaleX(0.850)">CHIYODA KU</div>
<div class="t" style="left:367.0px;top:220px;color:#008000;transform:scaleX(0.850)">HIBIYAKOEN</div>
<div class="t" style="left:7.0px;top:238px;color:#008000;transform:scaleX(0.870)">1000013</div>
<div class="t" style="left:94.0px;top:238px;color:#008000;transform:scaleX(0.850)">TOKYO TO</div>
<div class="t" style="left:200.0px;top:238px;color:#008000;transform:scaleX(0.850)">CHIYODA KU</div>
<div class="t" style="left:367.0px;top:238px;color:#008000;transform:scaleX(0.850)">KASUMIGASEKI (TSUGINOBIRUONOZOKU)</div>
<div class="t" style="left:7.0px;top:256px;color:#008000;transform:scaleX(0.870)">1000014</div>
<div class="t" style="left:94.0px;top:256px;color:#008000;transform:scaleX(0.850)">TOKYO TO</div>
<div class="t" style="left:200.0px;top:256px;color:#008000;transform:scaleX(0.850)">CHIYODA KU</div>
<div class="t" style="left:367.0px;top:256px;color:#008000;transform:scaleX(0.850)">NAGATACHO (TSUGINOBIRUONOZOKU)</div>
<div class="t" style="left:7.0px;top:274px;color:#008000;transform:scaleX(0.870)">100002</div>
<div class="t" style="left:94.0px;top:274px;color:#008000;transform:scaleX(0.850)">AKITA KEN</div>
<div class="t" style="left:200.0px;top:274px;color:#008000;transform:scaleX(0.850)">AKITA SHI</div>
<div class="t" style="left:367.0px;top:274px;color:#008000;transform:scaleX(0.850)">HIGASHIDORI NAKAMACHI</div>
<div class="t" style="left:7.0px;top:292px;color:#008000;transform:scaleX(0.870)">100003</div>
<div class="t" style="left:94.0px;top:292px;color:#008000;transform:scaleX(0.850)">AKITA KEN</div>
<div class="t" style="left:200.0px;top:292px;color:#008000;transform:scaleX(0.850)">AKITA SHI</div>
<div class="t" style="left:367.0px;top:292px;color:#008000;transform:scaleX(0.850)">HIGASHIDORI</div>
<div class="t" style="left:7.0px;top:310px;color:#008000;transform:scaleX(0.870)">100004</div>
<div class="t" style="left:94.0px;top:310px;color:#008000;transform:scaleX(0.850)">AKITA KEN</div>
<div class="t" style="left:200.0px;top:310px;color:#008000;transform:scaleX(0.850)">AKITA SHI</div>
<div class="t" style="left:367.0px;top:310px;color:#008000;transform:scaleX(0.850)">HIGASHIDORI KANNOMMAE</div>
<div class="t" style="left:7.0px;top:328px;color:#008000;transform:scaleX(0.870)">100005</div>
<div class="t" style="left:94.0px;top:328px;color:#008000;transform:scaleX(0.850)">AKITA KEN</div>
<div class="t" style="left:200.0px;top:328px;color:#008000;transform:scaleX(0.850)">AKITA SHI</div>
<div class="t" style="left:367.0px;top:328px;color:#008000;transform:scaleX(0.850)">HIGASHIDORI MYODEN</div>
<div class="t" style="left:7.0px;top:346px;color:#008000;transform:scaleX(0.870)">100006</div>
<div class="t" style="left:94.0px;top:346px;color:#008000;transform:scaleX(0.850)">AKITA KEN</div>
<div class="t" style="left:200.0px;top:346px;color:#008000;transform:scaleX(0.850)">AKITA SHI</div>
<div class="t" style="left:367.0px;top:346px;color:#008000;transform:scaleX(0.850)">HIGASHIDORI TATENOKOSHI</div>
</div>
<div style="left:1412px;top:149px;width:16px;height:16px;background:#d4d0c8"></div>
<div style="left:1413px;top:150px;width:14px;height:1px;background:#ffffff"></div>
<div style="left:1413px;top:150px;width:1px;height:14px;background:#ffffff"></div>
<div style="left:1412px;top:164px;width:16px;height:1px;background:#404040"></div>
<div style="left:1427px;top:149px;width:1px;height:16px;background:#404040"></div>
<div style="left:1413px;top:163px;width:14px;height:1px;background:#808080"></div>
<div style="left:1426px;top:150px;width:1px;height:14px;background:#808080"></div>
<svg style="left:1416px;top:155px" width="7" height="4" viewBox="0 0 7 4"><path d="M3.5 0 L7 4 L0 4 Z" fill="#000"/></svg>
<div style="left:1412px;top:165px;width:16px;height:8px;background:#d4d0c8"></div>
<div style="left:1413px;top:166px;width:14px;height:1px;background:#ffffff"></div>
<div style="left:1413px;top:166px;width:1px;height:6px;background:#ffffff"></div>
<div style="left:1412px;top:172px;width:16px;height:1px;background:#404040"></div>
<div style="left:1427px;top:165px;width:1px;height:8px;background:#404040"></div>
<div style="left:1413px;top:171px;width:14px;height:1px;background:#808080"></div>
<div style="left:1426px;top:166px;width:1px;height:6px;background:#808080"></div>
<div style="left:1412px;top:173px;width:16px;height:293px;background-color:#fff;background-image:linear-gradient(45deg,#d4d0c8 25%,transparent 25%,transparent 75%,#d4d0c8 75%),linear-gradient(45deg,#d4d0c8 25%,transparent 25%,transparent 75%,#d4d0c8 75%);background-size:2px 2px;background-position:0 0,1px 1px"></div>
<div style="left:1412px;top:466px;width:16px;height:16px;background:#d4d0c8"></div>
<div style="left:1413px;top:467px;width:14px;height:1px;background:#ffffff"></div>
<div style="left:1413px;top:467px;width:1px;height:14px;background:#ffffff"></div>
<div style="left:1412px;top:481px;width:16px;height:1px;background:#404040"></div>
<div style="left:1427px;top:466px;width:1px;height:16px;background:#404040"></div>
<div style="left:1413px;top:480px;width:14px;height:1px;background:#808080"></div>
<div style="left:1426px;top:467px;width:1px;height:14px;background:#808080"></div>
<svg style="left:1416px;top:472px" width="7" height="4" viewBox="0 0 7 4"><path d="M0 0 L7 0 L3.5 4 Z" fill="#000"/></svg>
<svg style="left:321px;top:497px" width="7" height="7" viewBox="0 0 7 7"><path d="M0.5 0.5 L6.5 6.5 M6.5 0.5 L0.5 6.5" stroke="#000" stroke-width="1.6"/></svg>
<div class="c" style="left:345.0px;top:493px;width:9.0px;color:#000;">フ</div>
<div class="c" style="left:354.0px;top:493px;width:7.1px;color:#000;">ィ</div>
<div class="c" style="left:361.1px;top:493px;width:9.0px;color:#000;">ル</div>
<div class="c" style="left:370.0px;top:493px;width:9.0px;color:#000;">タ</div>
<div style="left:381px;top:491px;width:153px;height:19px;background:#ffffff"></div>
<div style="left:381px;top:491px;width:153px;height:1px;background:#808080"></div>
<div style="left:381px;top:491px;width:1px;height:19px;background:#808080"></div>
<div style="left:381px;top:509px;width:153px;height:1px;background:#ffffff"></div>
<div style="left:533px;top:491px;width:1px;height:19px;background:#ffffff"></div>
<div style="left:382px;top:492px;width:151px;height:1px;background:#404040"></div>
<div style="left:382px;top:492px;width:1px;height:17px;background:#404040"></div>
<div style="left:382px;top:508px;width:151px;height:1px;background:#d4d0c8"></div>
<div style="left:532px;top:492px;width:1px;height:17px;background:#d4d0c8"></div>
<div style="left:4px;top:518px;width:1430px;height:294px;background:#ffffff"></div>
<div style="left:4px;top:518px;width:1430px;height:1px;background:#808080"></div>
<div style="left:4px;top:518px;width:1px;height:294px;background:#808080"></div>
<div style="left:4px;top:811px;width:1430px;height:1px;background:#ffffff"></div>
<div style="left:1433px;top:518px;width:1px;height:294px;background:#ffffff"></div>
<div style="left:5px;top:519px;width:1428px;height:1px;background:#404040"></div>
<div style="left:5px;top:519px;width:1px;height:292px;background:#404040"></div>
<div style="left:5px;top:810px;width:1428px;height:1px;background:#d4d0c8"></div>
<div style="left:1432px;top:519px;width:1px;height:292px;background:#d4d0c8"></div>
<div style="left:6px;top:520px;width:16px;height:275px;background:#d4d0c8"></div>
<div style="left:23px;top:520px;width:1393px;height:275px;overflow:hidden">
<div class="m" style="left:2px;top:0px"><span class="kw">SELECT</span> <span class="op">*</span> <span class="kw">FROM</span> <span class="id">`post`</span><span class="op">.</span><span class="id">`post`</span> <span class="kw">LIMIT</span> <span class="nu">10000</span><span class="op">;</span></div>
<div class="m" style="left:2px;top:16px"><span class="kw">SHOW</span> <span class="kw">CREATE</span> <span class="kw">TABLE</span> <span class="id">`post`</span><span class="op">.</span><span class="id">`post`</span><span class="op">;</span></div>
<div class="m" style="left:2px;top:32px"><span class="kw">SHOW</span> <span class="kw">TABLE</span> <span class="kw">STATUS</span> <span class="kw">LIKE</span> <span class="st">&#x27;post&#x27;</span><span class="op">;</span></div>
<div class="m" style="left:2px;top:48px"><span class="cm">/* Browsing is currently limited to a maximum of 10,000 rows. To see more rows, increase this maximum in <i>ツ</i><i>ー</i><i>ル</i> &gt; <i>環</i><i>境</i><i>設</i><i>定</i> &gt; <i>デ</i><i>ー</i><i>タ</i>. */</span></div>
<div class="m" style="left:2px;top:64px"><span class="kw">SELECT</span> <span class="op">*</span> <span class="kw">FROM</span> <span class="id">`post`</span><span class="op">.</span><span class="id">`post`</span> <span class="kw">ORDER</span> <span class="kw">BY</span> <span class="id">`ZipCode`</span> <span class="kw">ASC</span> <span class="kw">LIMIT</span> <span class="nu">10000</span><span class="op">;</span></div>
<div class="m" style="left:2px;top:80px"><span class="kw">SHOW</span> <span class="kw">CREATE</span> <span class="kw">TABLE</span> <span class="id">`post`</span><span class="op">.</span><span class="id">`post`</span><span class="op">;</span></div>
<div class="m" style="left:2px;top:96px"><span class="kw">SHOW</span> <span class="kw">TABLE</span> <span class="kw">STATUS</span> <span class="kw">LIKE</span> <span class="st">&#x27;post&#x27;</span><span class="op">;</span></div>
<div class="m" style="left:2px;top:112px"><span class="cm">/* Browsing is currently limited to a maximum of 10,000 rows. To see more rows, increase this maximum in <i>ツ</i><i>ー</i><i>ル</i> &gt; <i>環</i><i>境</i><i>設</i><i>定</i> &gt; <i>デ</i><i>ー</i><i>タ</i>. */</span></div>
<div class="m" style="left:2px;top:128px"><span class="kw">UPDATE</span> <span class="id">`post`</span><span class="op">.</span><span class="id">`post`</span> <span class="kw">SET</span> <span class="id">`City Kana`</span><span class="op">=</span><span class="st">&#x27;SAPPORO SHI KITA-KU&#x27;</span> <span class="kw">WHERE</span>  <span class="id">`ZipCode`</span><span class="op">=</span><span class="st">&#x27;10000&#x27;</span> <span class="kw">AND</span> <span class="id">`Prefecture Kana`</span><span class="op">=</span><span class="st">&#x27;HOKKAIDO&#x27;</span> <span class="kw">AND</span> <span class="id">`City Kana`</span><span class="op">=</span><span class="st">&#x27;SAPPORO SHI KITA KU&#x27;</span> <span class="kw">AND</span> <span class="id">`Town Kana`</span><span class="op">=</span><span class="st">&#x27;IKANIKEISAIGANAIBAAI&#x27;</span> <span class="kw">LIMIT</span> <span class="nu">1</span><span class="op">;</span></div>
<div class="m" style="left:2px;top:144px"><span class="kw">SELECT</span> <span class="id">`ZipCode`</span><span class="op">,</span> <span class="id">`Prefecture Kana`</span><span class="op">,</span> <span class="id">`City Kana`</span><span class="op">,</span> <span class="id">`Town Kana`</span> <span class="kw">FROM</span> <span class="id">`post`</span><span class="op">.</span><span class="id">`post`</span> <span class="kw">WHERE</span>  <span class="id">`ZipCode`</span><span class="op">=</span><span class="st">&#x27;10000&#x27;</span> <span class="kw">AND</span> <span class="id">`Prefecture Kana`</span><span class="op">=</span><span class="st">&#x27;HOKKAIDO&#x27;</span> <span class="kw">AND</span> <span class="id">`City Kana`</span><span class="op">=</span><span class="st">&#x27;SAPPORO SHI KITA-KU&#x27;</span> <span class="kw">AND</span> <span class="id">`Town Kana`</span><span class="op">=</span><span class="st">&#x27;IKANIKEISAIGANAIBAAI&#x27;</span> <span class="kw">LIMIT</span> <span class="nu">1</span><span class="op">;</span></div>
<div class="m" style="left:2px;top:160px"><span class="kw">SHOW</span> <span class="kw">TABLE</span> <span class="kw">STATUS</span> <span class="kw">LIKE</span> <span class="st">&#x27;post&#x27;</span><span class="op">;</span></div>
<div class="m" style="left:2px;top:176px"><span class="kw">UPDATE</span> <span class="id">`post`</span><span class="op">.</span><span class="id">`post`</span> <span class="kw">SET</span> <span class="id">`City Kana`</span><span class="op">=</span><span class="st">&#x27;SAPPORO SHI KITA-KU1&#x27;</span> <span class="kw">WHERE</span>  <span class="id">`ZipCode`</span><span class="op">=</span><span class="st">&#x27;10000&#x27;</span> <span class="kw">AND</span> <span class="id">`Prefecture Kana`</span><span class="op">=</span><span class="st">&#x27;HOKKAIDO&#x27;</span> <span class="kw">AND</span> <span class="id">`City Kana`</span><span class="op">=</span><span class="st">&#x27;SAPPORO SHI KITA-KU&#x27;</span> <span class="kw">AND</span> <span class="id">`Town Kana`</span><span class="op">=</span><span class="st">&#x27;IKANIKEISAIGANAIBAAI&#x27;</span> <span class="kw">LIMIT</span> <span class="nu">1</span><span class="op">;</span></div>
<div class="m" style="left:2px;top:192px"><span class="kw">SELECT</span> <span class="id">`ZipCode`</span><span class="op">,</span> <span class="id">`Prefecture Kana`</span><span class="op">,</span> <span class="id">`City Kana`</span><span class="op">,</span> <span class="id">`Town Kana`</span> <span class="kw">FROM</span> <span class="id">`post`</span><span class="op">.</span><span class="id">`post`</span> <span class="kw">WHERE</span>  <span class="id">`ZipCode`</span><span class="op">=</span><span class="st">&#x27;10000&#x27;</span> <span class="kw">AND</span> <span class="id">`Prefecture Kana`</span><span class="op">=</span><span class="st">&#x27;HOKKAIDO&#x27;</span> <span class="kw">AND</span> <span class="id">`City Kana`</span><span class="op">=</span><span class="st">&#x27;SAPPORO SHI KITA-KU1&#x27;</span> <span class="kw">AND</span> <span class="id">`Town Kana`</span><span class="op">=</span><span class="st">&#x27;IKANIKEISAIGANAIBAAI&#x27;</span> <span class="kw">LIMIT</span> <span class="nu">1</span><span class="op">;</span></div>
<div class="m" style="left:2px;top:208px"><span class="kw">SHOW</span> <span class="kw">TABLE</span> <span class="kw">STATUS</span> <span class="kw">LIKE</span> <span class="st">&#x27;post&#x27;</span><span class="op">;</span></div>
<div class="m" style="left:2px;top:224px"><span class="kw">UPDATE</span> <span class="id">`post`</span><span class="op">.</span><span class="id">`post`</span> <span class="kw">SET</span> <span class="id">`City Kana`</span><span class="op">=</span><span class="st">&#x27;SAPPORO SHI KITA-KU&#x27;</span> <span class="kw">WHERE</span>  <span class="id">`ZipCode`</span><span class="op">=</span><span class="st">&#x27;10000&#x27;</span> <span class="kw">AND</span> <span class="id">`Prefecture Kana`</span><span class="op">=</span><span class="st">&#x27;HOKKAIDO&#x27;</span> <span class="kw">AND</span> <span class="id">`City Kana`</span><span class="op">=</span><span class="st">&#x27;SAPPORO SHI KITA-KU1&#x27;</span> <span class="kw">AND</span> <span class="id">`Town Kana`</span><span class="op">=</span><span class="st">&#x27;IKANIKEISAIGANAIBAAI&#x27;</span> <span class="kw">LIMIT</span> <span class="nu">1</span><span class="op">;</span></div>
<div class="m" style="left:2px;top:240px"><span class="kw">SELECT</span> <span class="id">`ZipCode`</span><span class="op">,</span> <span class="id">`Prefecture Kana`</span><span class="op">,</span> <span class="id">`City Kana`</span><span class="op">,</span> <span class="id">`Town Kana`</span> <span class="kw">FROM</span> <span class="id">`post`</span><span class="op">.</span><span class="id">`post`</span> <span class="kw">WHERE</span>  <span class="id">`ZipCode`</span><span class="op">=</span><span class="st">&#x27;10000&#x27;</span> <span class="kw">AND</span> <span class="id">`Prefecture Kana`</span><span class="op">=</span><span class="st">&#x27;HOKKAIDO&#x27;</span> <span class="kw">AND</span> <span class="id">`City Kana`</span><span class="op">=</span><span class="st">&#x27;SAPPORO SHI KITA-KU&#x27;</span> <span class="kw">AND</span> <span class="id">`Town Kana`</span><span class="op">=</span><span class="st">&#x27;IKANIKEISAIGANAIBAAI&#x27;</span> <span class="kw">LIMIT</span> <span class="nu">1</span><span class="op">;</span></div>
<div class="m" style="left:2px;top:256px"><span class="kw">SHOW</span> <span class="kw">TABLE</span> <span class="kw">STATUS</span> <span class="kw">LIKE</span> <span class="st">&#x27;post&#x27;</span><span class="op">;</span></div>
</div>
<div class="t" style="left:9.0px;top:522px;color:#000;transform:scaleX(0.900)">45</div>
<div class="t" style="left:9.0px;top:538px;color:#000;transform:scaleX(0.900)">46</div>
<div class="t" style="left:9.0px;top:554px;color:#000;transform:scaleX(0.900)">47</div>
<div class="t" style="left:9.0px;top:570px;color:#000;transform:scaleX(0.900)">48</div>
<div class="t" style="left:9.0px;top:586px;color:#000;transform:scaleX(0.900)">49</div>
<div class="t" style="left:9.0px;top:602px;color:#000;transform:scaleX(0.900)">50</div>
<div class="t" style="left:9.0px;top:618px;color:#000;transform:scaleX(0.900)">51</div>
<div class="t" style="left:9.0px;top:634px;color:#000;transform:scaleX(0.900)">52</div>
<div class="t" style="left:9.0px;top:650px;color:#000;transform:scaleX(0.900)">53</div>
<div class="t" style="left:9.0px;top:666px;color:#000;transform:scaleX(0.900)">54</div>
<div class="t" style="left:9.0px;top:682px;color:#000;transform:scaleX(0.900)">55</div>
<div class="t" style="left:9.0px;top:698px;color:#000;transform:scaleX(0.900)">56</div>
<div class="t" style="left:9.0px;top:714px;color:#000;transform:scaleX(0.900)">57</div>
<div class="t" style="left:9.0px;top:730px;color:#000;transform:scaleX(0.900)">58</div>
<div class="t" style="left:9.0px;top:746px;color:#000;transform:scaleX(0.900)">59</div>
<div class="t" style="left:9.0px;top:762px;color:#000;transform:scaleX(0.900)">60</div>
<div class="t" style="left:9.0px;top:778px;color:#000;transform:scaleX(0.900)">61</div>
<div style="left:1416px;top:520px;width:16px;height:16px;background:#d4d0c8"></div>
<div style="left:1417px;top:521px;width:14px;height:1px;background:#ffffff"></div>
<div style="left:1417px;top:521px;width:1px;height:14px;background:#ffffff"></div>
<div style="left:1416px;top:535px;width:16px;height:1px;background:#404040"></div>
<div style="left:1431px;top:520px;width:1px;height:16px;background:#404040"></div>
<div style="left:1417px;top:534px;width:14px;height:1px;background:#808080"></div>
<div style="left:1430px;top:521px;width:1px;height:14px;background:#808080"></div>
<svg style="left:1420px;top:526px" width="7" height="4" viewBox="0 0 7 4"><path d="M3.5 0 L7 4 L0 4 Z" fill="#000"/></svg>
<div style="left:1416px;top:536px;width:16px;height:176px;background-color:#fff;background-image:linear-gradient(45deg,#d4d0c8 25%,transparent 25%,transparent 75%,#d4d0c8 75%),linear-gradient(45deg,#d4d0c8 25%,transparent 25%,transparent 75%,#d4d0c8 75%);background-size:2px 2px;background-position:0 0,1px 1px"></div>
<div style="left:1416px;top:712px;width:16px;height:68px;background:#d4d0c8"></div>
<div style="left:1417px;top:713px;width:14px;height:1px;background:#ffffff"></div>
<div style="left:1417px;top:713px;width:1px;height:66px;background:#ffffff"></div>
<div style="left:1416px;top:779px;width:16px;height:1px;background:#404040"></div>
<div style="left:1431px;top:712px;width:1px;height:68px;background:#404040"></div>
<div style="left:1417px;top:778px;width:14px;height:1px;background:#808080"></div>
<div style="left:1430px;top:713px;width:1px;height:66px;background:#808080"></div>
<div style="left:1416px;top:779px;width:16px;height:16px;background:#d4d0c8"></div>
<div style="left:1417px;top:780px;width:14px;height:1px;background:#ffffff"></div>
<div style="left:1417px;top:780px;width:1px;height:14px;background:#ffffff"></div>
<div style="left:1416px;top:794px;width:16px;height:1px;background:#404040"></div>
<div style="left:1431px;top:779px;width:1px;height:16px;background:#404040"></div>
<div style="left:1417px;top:793px;width:14px;height:1px;background:#808080"></div>
<div style="left:1430px;top:780px;width:1px;height:14px;background:#808080"></div>
<svg style="left:1420px;top:785px" width="7" height="4" viewBox="0 0 7 4"><path d="M0 0 L7 0 L3.5 4 Z" fill="#000"/></svg>
<div style="left:6px;top:795px;width:16px;height:16px;background:#d4d0c8"></div>
<div style="left:7px;top:796px;width:14px;height:1px;background:#ffffff"></div>
<div style="left:7px;top:796px;width:1px;height:14px;background:#ffffff"></div>
<div style="left:6px;top:810px;width:16px;height:1px;background:#404040"></div>
<div style="left:21px;top:795px;width:1px;height:16px;background:#404040"></div>
<div style="left:7px;top:809px;width:14px;height:1px;background:#808080"></div>
<div style="left:20px;top:796px;width:1px;height:14px;background:#808080"></div>
<svg style="left:11px;top:799px" width="4" height="7" viewBox="0 0 4 7"><path d="M4 0 L4 7 L0 3.5 Z" fill="#000"/></svg>
<div style="left:22px;top:795px;width:1212px;height:16px;background:#d4d0c8"></div>
<div style="left:23px;top:796px;width:1210px;height:1px;background:#ffffff"></div>
<div style="left:23px;top:796px;width:1px;height:14px;background:#ffffff"></div>
<div style="left:22px;top:810px;width:1212px;height:1px;background:#404040"></div>
<div style="left:1233px;top:795px;width:1px;height:16px;background:#404040"></div>
<div style="left:23px;top:809px;width:1210px;height:1px;background:#808080"></div>
<div style="left:1232px;top:796px;width:1px;height:14px;background:#808080"></div>
<div style="left:1234px;top:795px;width:166px;height:16px;background-color:#fff;background-image:linear-gradient(45deg,#d4d0c8 25%,transparent 25%,transparent 75%,#d4d0c8 75%),linear-gradient(45deg,#d4d0c8 25%,transparent 25%,transparent 75%,#d4d0c8 75%);background-size:2px 2px;background-position:0 0,1px 1px"></div>
<div style="left:1400px;top:795px;width:16px;height:16px;background:#d4d0c8"></div>
<div style="left:1401px;top:796px;width:14px;height:1px;background:#ffffff"></div>
<div style="left:1401px;top:796px;width:1px;height:14px;background:#ffffff"></div>
<div style="left:1400px;top:810px;width:16px;height:1px;background:#404040"></div>
<div style="left:1415px;top:795px;width:1px;height:16px;background:#404040"></div>
<div style="left:1401px;top:809px;width:14px;height:1px;background:#808080"></div>
<div style="left:1414px;top:796px;width:1px;height:14px;background:#808080"></div>
<svg style="left:1406px;top:799px" width="4" height="7" viewBox="0 0 4 7"><path d="M0 0 L0 7 L4 3.5 Z" fill="#000"/></svg>
<div style="left:1416px;top:795px;width:16px;height:16px;background:#d4d0c8"></div>
<div style="left:4px;top:815px;width:574px;height:1px;background:#808080"></div>
<div style="left:4px;top:815px;width:1px;height:14px;background:#808080"></div>
<div style="left:4px;top:828px;width:574px;height:1px;background:#ffffff"></div>
<div style="left:577px;top:815px;width:1px;height:14px;background:#ffffff"></div>
<div style="left:580px;top:815px;width:109px;height:1px;background:#808080"></div>
<div style="left:580px;top:815px;width:1px;height:14px;background:#808080"></div>
<div style="left:580px;top:828px;width:109px;height:1px;background:#ffffff"></div>
<div style="left:688px;top:815px;width:1px;height:14px;background:#ffffff"></div>
<div style="left:690px;top:815px;width:138px;height:1px;background:#808080"></div>
<div style="left:690px;top:815px;width:1px;height:14px;background:#808080"></div>
<div style="left:690px;top:828px;width:138px;height:1px;background:#ffffff"></div>
<div style="left:827px;top:815px;width:1px;height:14px;background:#ffffff"></div>
<div style="left:830px;top:815px;width:104px;height:1px;background:#808080"></div>
<div style="left:830px;top:815px;width:1px;height:14px;background:#808080"></div>
<div style="left:830px;top:828px;width:104px;height:1px;background:#ffffff"></div>
<div style="left:933px;top:815px;width:1px;height:14px;background:#ffffff"></div>
<div style="left:935px;top:815px;width:169px;height:1px;background:#808080"></div>
<div style="left:935px;top:815px;width:1px;height:14px;background:#808080"></div>
<div style="left:935px;top:828px;width:169px;height:1px;background:#ffffff"></div>
<div style="left:1103px;top:815px;width:1px;height:14px;background:#ffffff"></div>
<div style="left:1105px;top:815px;width:78px;height:1px;background:#808080"></div>
<div style="left:1105px;top:815px;width:1px;height:14px;background:#808080"></div>
<div style="left:1105px;top:828px;width:78px;height:1px;background:#ffffff"></div>
<div style="left:1182px;top:815px;width:1px;height:14px;background:#ffffff"></div>
<div style="left:1185px;top:815px;width:249px;height:1px;background:#808080"></div>
<div style="left:1185px;top:815px;width:1px;height:14px;background:#808080"></div>
<div style="left:1185px;top:828px;width:249px;height:1px;background:#ffffff"></div>
<div style="left:1433px;top:815px;width:1px;height:14px;background:#ffffff"></div>
<div class="t" style="left:583.0px;top:815px;color:#000;transform:scaleX(0.834)">1 : 3</div>
<svg style="left:693px;top:816px" width="14" height="14" viewBox="0 0 14 14"><circle cx="7" cy="7" r="6.2" fill="#e6eefa" stroke="#c89050" stroke-width="1.2"/><circle cx="7" cy="7" r="4.5" fill="#fff" stroke="#6a8ac8" stroke-width="0.8"/><path d="M7 4v3.5h2.5" stroke="#2a3a6a" fill="none"/></svg>
<div class="c" style="left:709.0px;top:814px;width:12.0px;color:#000;">接</div>
<div class="c" style="left:721.0px;top:814px;width:12.0px;color:#000;">続</div>
<div class="c" style="left:733.0px;top:814px;width:12.0px;color:#000;">済</div>
<div class="c" style="left:745.0px;top:814px;width:9.5px;color:#000;">み</div>
<div class="t" style="left:754.5px;top:815px;color:#000;transform:scaleX(0.924)">: 2 </div>
<div class="c" style="left:769.9px;top:814px;width:12.0px;color:#000;">日</div>
<div class="t" style="left:781.9px;top:815px;color:#000;transform:scaleX(0.924)">, 19:09 h</div>
<svg style="left:831px;top:815px" width="18" height="14" viewBox="0 0 18 14"><path d="M1.5 1.5 L4 1.5 L6.5 2.5 L9 4.5 L10.5 7 L12 9.5 L15 11.5 L11 12.5 L9 12 L5.5 12 L4 9 L3 5 Z" fill="#fff"/><path d="M1.5 1.5 L4 1.5 L6.5 2.5 L9 4.5 L10.5 7 L12 9.5 L15 11.5 M2.5 2.5 L3.5 5 L4 9 L4.5 11.5 L5.5 10 L7 11.5" fill="none" stroke="#2e6478" stroke-width="1.2" stroke-linejoin="round"/></svg>
<div class="t" style="left:850.0px;top:815px;color:#000;transform:scaleX(0.885)">MySQL 5.6.21</div>
<div class="c" style="left:936.0px;top:814px;width:9.5px;color:#000;">ア</div>
<div class="c" style="left:945.5px;top:814px;width:7.5px;color:#000;">ッ</div>
<div class="c" style="left:953.0px;top:814px;width:9.5px;color:#000;">プ</div>
<div class="c" style="left:962.5px;top:814px;width:9.5px;color:#000;">タ</div>
<div class="c" style="left:972.0px;top:814px;width:9.5px;color:#000;">イ</div>
<div class="c" style="left:981.5px;top:814px;width:9.5px;color:#000;">ム</div>
<div class="t" style="left:991.0px;top:815px;color:#000;transform:scaleX(0.886)">: 25 </div>
<div class="c" style="left:1011.7px;top:814px;width:12.0px;color:#000;">日</div>
<div class="t" style="left:1023.7px;top:815px;color:#000;transform:scaleX(0.886)">, 07:55 h</div>
<svg style="left:1191px;top:819px" width="8" height="8" viewBox="0 0 8 8"><circle cx="4" cy="4" r="3" fill="#8cd47a" stroke="#3a9a3a" stroke-width="0.8"/><circle cx="4" cy="4" r="1.2" fill="#c8f0c0"/></svg>
<div class="c" style="left:1206.0px;top:814px;width:8.5px;color:#000;">ア</div>
<div class="c" style="left:1214.5px;top:814px;width:8.5px;color:#000;">イ</div>
<div class="c" style="left:1223.0px;top:814px;width:8.5px;color:#000;">ド</div>
<div class="c" style="left:1231.5px;top:814px;width:8.5px;color:#000;">ル</div>
<svg style="left:1422px;top:817px" width="12" height="12" viewBox="0 0 12 12"><path d="M11 1 L1 11 M11 5 L5 11 M11 9 L9 11" stroke="#808080"/><path d="M12 2 L2 12 M12 6 L6 12 M12 10 L10 12" stroke="#fff"/></svg>
</body></html>
